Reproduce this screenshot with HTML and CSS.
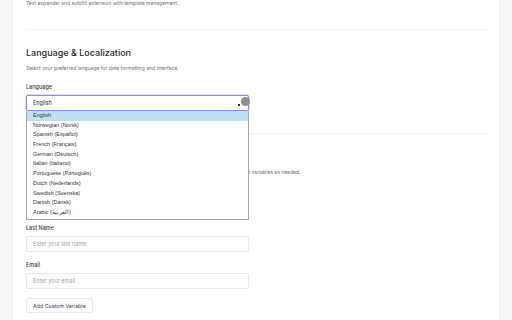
FILE: index.html
```html
<!DOCTYPE html>
<html>
<head>
<meta charset="utf-8">
<link rel="stylesheet" href="styles.css">
</head>
<body>
<div class="page">
  <div class="rail rail-left"></div>
  <main class="main">
    <p class="tagline">Text expander and autofill extension with template management.</p>
    <hr class="divider">
    <section class="section">
      <h2 class="title">Language &amp; Localization</h2>
      <p class="desc">Select your preferred language for date formatting and interface.</p>
      <div class="field">
        <div class="label">Language</div>
        <div class="select-wrap">
          <div class="select focused">
            <span>English</span>
            <span class="caret"></span>
          </div>
          <span class="cursor-dot"></span>
          <ul class="listbox">
            <li class="opt active">English</li>
            <li class="opt">Norwegian (Norsk)</li>
            <li class="opt">Spanish (Español)</li>
            <li class="opt">French (Français)</li>
            <li class="opt">German (Deutsch)</li>
            <li class="opt">Italian (Italiano)</li>
            <li class="opt">Portuguese (Português)</li>
            <li class="opt">Dutch (Nederlands)</li>
            <li class="opt">Swedish (Svenska)</li>
            <li class="opt">Danish (Dansk)</li>
            <li class="opt">Arabic (<span dir="rtl">العربية</span>)</li>
          </ul>
        </div>
      </div>
    </section>
    <hr class="divider">
    <section class="section">
      <h2 class="title">Personal Information</h2>
      <p class="desc">Set up your personal information that will be used to automatically fill in templates. Add custom variables as needed.</p>
      <div class="field">
        <div class="label">First Name</div>
        <div class="input">Enter your first name</div>
      </div>
      <div class="field">
        <div class="label">Last Name</div>
        <div class="input">Enter your last name</div>
      </div>
      <div class="field">
        <div class="label">Email</div>
        <div class="input">Enter your email</div>
      </div>
      <button class="btn">Add Custom Variable</button>
    </section>
  </main>
  <div class="rail rail-right"></div>
</div>
</body>
</html>
```
FILE: styles.css
```css
html, body {
  margin: 0;
  padding: 0;
  background: #ffffff;
}
body {
  font-family: Inter, "Liberation Sans", sans-serif;
  color: #1f2937;
}
.page {
  display: flex;
  width: 512px;
  height: 320px;
  overflow: hidden;
}
.rail {
  background: #f6f7f9;
  flex: none;
}
.rail-left {
  width: 12px;
  border-right: 1px solid #eceef2;
}
.rail-right {
  width: 12px;
  border-left: 1px solid #eceef2;
}
.main {
  flex: 1;
  padding: 0 12px 0 13px;
  background: #fff;
}
.tagline {
  margin: 0;
  font-size: 5px;
  line-height: 7px;
  color: #6b7280;
}
.divider {
  border: 0;
  border-top: 1px solid #f3f4f6;
  margin: 22px 0 0 0;
  height: 0;
}
.section {
  padding-top: 17px;
}
.title {
  margin: 0;
  font-size: 9px;
  line-height: 12px;
  font-weight: 500;
  color: #1f2937;
}
.desc {
  margin: 6px 0 0 0;
  font-size: 5px;
  line-height: 7px;
  color: #6b7280;
}
.field {
  margin-top: 12px;
  width: 223px;
}
.field + .field {
  margin-top: 10px;
}
.label {
  font-size: 5.5px;
  line-height: 7px;
  font-weight: 500;
  color: #374151;
  margin-bottom: 4px;
}
.select-wrap {
  position: relative;
}
.select {
  height: 16px;
  box-sizing: border-box;
  border: 1px solid #e5e7eb;
  border-radius: 2px;
  display: flex;
  align-items: center;
  justify-content: space-between;
  padding: 0 6px 0 6px;
  font-size: 5.5px;
  color: #1f2937;
}
.select.focused {
  border-color: #8b8cf2;
  box-shadow: 0 0 0 0.5px #b9baf7;
}
.caret {
  width: 2px;
  height: 2px;
  background: #333;
  margin-top: 3px;
  margin-right: 2px;
}
.cursor-dot {
  position: absolute;
  right: -1px;
  top: 2px;
  width: 9px;
  height: 9px;
  border-radius: 50%;
  background: #8d8d8d;
}
.listbox {
  position: absolute;
  left: 0;
  right: 0;
  top: 16px;
  margin: 0;
  padding: 0 0 1px 0;
  list-style: none;
  background: #fff;
  border: 1px solid #a6a6a6;
  border-top: 0;
  font-family: "Liberation Sans", Arial, sans-serif;
  font-size: 5.5px;
  color: #333;
  z-index: 5;
}
.opt {
  height: 9.7px;
  line-height: 9.7px;
  padding-left: 6px;
}
.opt.active {
  background: #c2e0f4;
}
.input {
  height: 16px;
  box-sizing: border-box;
  border: 1px solid #e5e7eb;
  border-radius: 2px;
  display: flex;
  align-items: center;
  padding: 0 6px;
  font-size: 5.5px;
  color: #9ca3af;
}
.btn {
  margin-top: 9px;
  height: 15px;
  padding: 0 6px;
  border: 1px solid #e5e7eb;
  border-radius: 3px;
  background: #fff;
  font-family: Inter, "Liberation Sans", sans-serif;
  font-size: 5.3px;
  color: #374151;
}
```
